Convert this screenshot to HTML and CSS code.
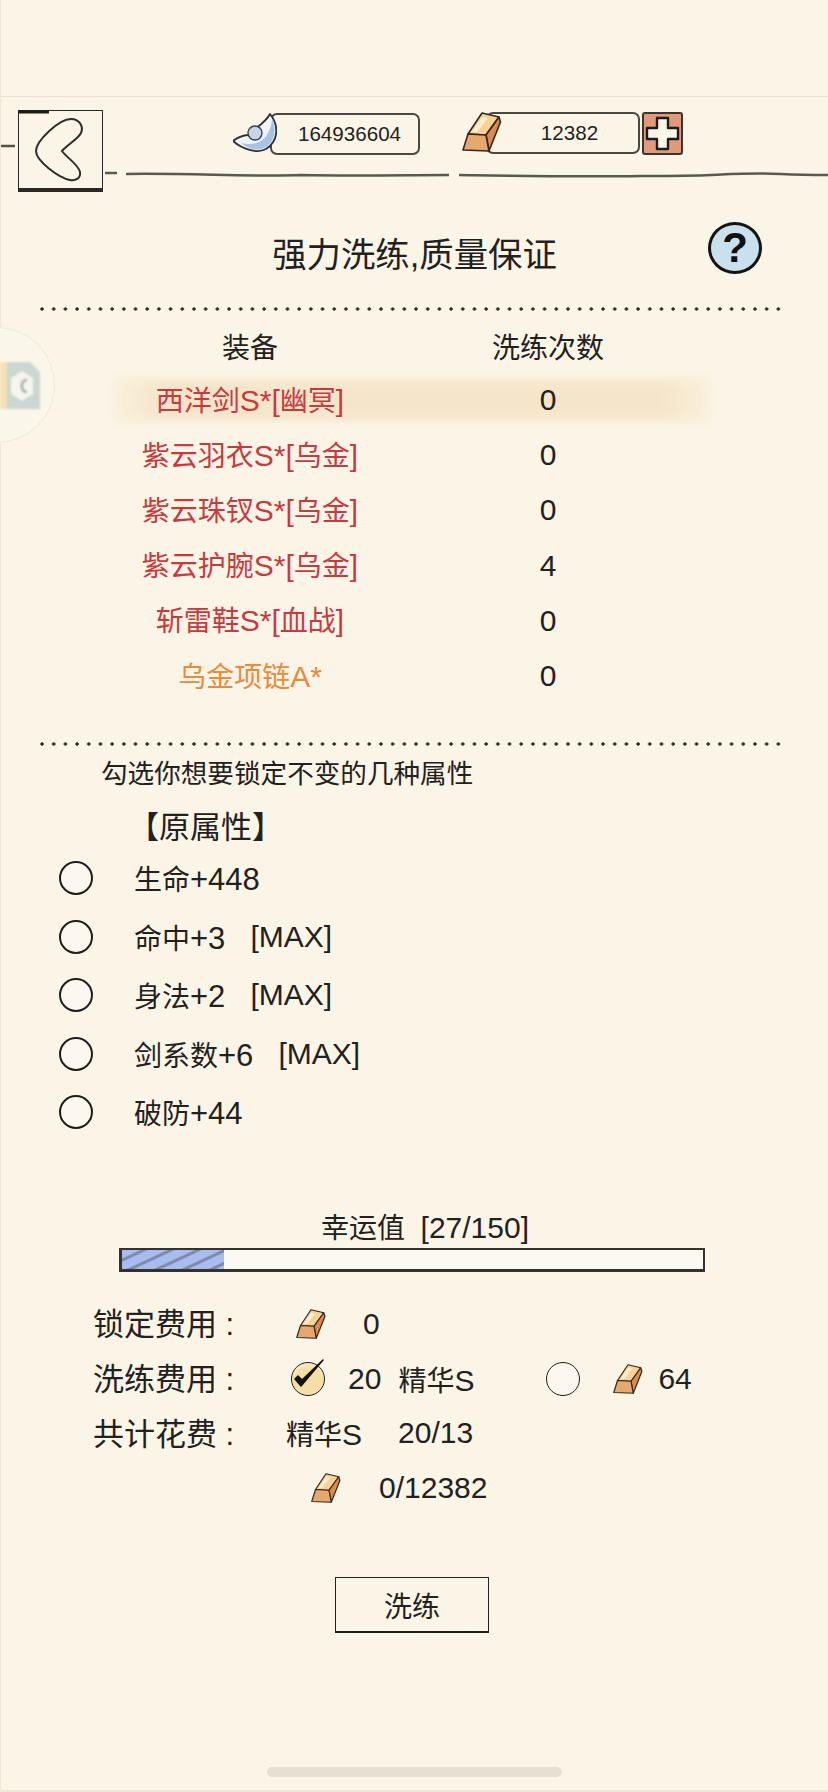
FILE: index.html
```html
<!DOCTYPE html>
<html lang="zh-CN">
<head>
  <meta charset="UTF-8">
  <meta name="viewport" content="width=device-width, initial-scale=1.0">
  <title>强力洗练</title>
  <link rel="stylesheet" href="styles.css">
</head>
<body>
  <svg class="defs" width="0" height="0">
    <symbol id="ingot" viewBox="0 0 40 40">
      <polygon points="20,1 37,5 24,23 6,22" fill="#f7d295" stroke="#33261a" stroke-width="1.6" stroke-linejoin="round"/>
      <polygon points="20,5 26,6 15,20 10,20" fill="#fdeccd"/>
      <polygon points="37,5 38.5,10 27,39 24,23" fill="#de8a4f" stroke="#33261a" stroke-width="1.6" stroke-linejoin="round"/>
      <polygon points="6,22 24,23 27,39 1,38" fill="#e6a86c" stroke="#33261a" stroke-width="1.6" stroke-linejoin="round"/>
    </symbol>
  </svg>

  <div class="page">
    <div class="status-space"></div>

    <div class="topbar">
      <svg class="topbar-line" viewBox="0 0 828 60" width="828" height="60">
        <path d="M0 21 H14" fill="none" stroke="#55524a" stroke-width="2.5"/>
        <path d="M104 48 H116 M125 49 C190 48 250 52 300 50 C350 51 410 50 448 50 M458 50 C520 51 570 52 640 51 C700 52 740 47 780 49 C800 50 815 50 828 50" fill="none" stroke="#5b5850" stroke-width="2.5"/>
      </svg>
      <button class="back-btn">
        <svg viewBox="0 0 85 82" width="85" height="82">
          <path d="M2 3 H32" fill="none" stroke="#1c1a18" stroke-width="3"/>
          <path d="M54 10 C62 10 67 17 64 24 C61 30 50 36 45 42 C50 49 61 55 63 63 C64 69 59 72 53 71 C42 69 19 52 19 42 C19 32 42 10 54 10 Z" fill="none" stroke="#2f2d2a" stroke-width="2"/>
        </svg>
      </button>
      <div class="money money-silver">
        <svg class="money-icon" viewBox="0 0 44 40" width="44" height="40">
          <path d="M37 1 C46 12 46 28 33 36 C24 41 9 36 0 28 C5 24 11 22 17 22 C20 15 31 12 37 1 Z" fill="#eff4fa" stroke="#2c3038" stroke-width="1.8" stroke-linejoin="round"/>
          <path d="M8 30 C18 33 30 30 35 20 C38 14 39 9 39 6 C44 16 42 28 33 34 C24 39 15 36 8 30 Z" fill="#a9c4e3"/>
          <circle cx="22" cy="20" r="7" fill="#c6d6ea" stroke="#3a3f48" stroke-width="1.4"/>
        </svg>
        <span class="pill pill-silver">164936604</span>
      </div>
      <div class="money money-gold">
        <svg class="money-icon" width="40" height="40"><use href="#ingot"/></svg>
        <span class="pill pill-gold">12382</span>
        <svg class="plus-btn" viewBox="0 0 41 43" width="41" height="43">
          <rect x="1" y="1" width="39" height="41" rx="2" fill="#e09a7b" stroke="#3c3630" stroke-width="2"/>
          <path d="M15 6 H26 V16 H36 V27 H26 V37 H15 V27 H5 V16 H15 Z" fill="#fbf6ea" stroke="#1f1c1a" stroke-width="2.4" stroke-linejoin="round"/>
        </svg>
      </div>
    </div>

    <div class="title-row">
      <span></span>
      <h1 class="title">强力洗练,质量保证</h1>
      <div class="help-btn">?</div>
    </div>

    <div class="dots"></div>

    <div class="equip-table">
      <div class="equip-row equip-head"><span>装备</span><span>洗练次数</span></div>
      <div class="equip-row selected"><span class="red">西洋剑<span class="n">S*[</span>幽冥<span class="n">]</span></span><span class="count">0</span></div>
      <div class="equip-row"><span class="red">紫云羽衣<span class="n">S*[</span>乌金<span class="n">]</span></span><span class="count">0</span></div>
      <div class="equip-row"><span class="red">紫云珠钗<span class="n">S*[</span>乌金<span class="n">]</span></span><span class="count">0</span></div>
      <div class="equip-row"><span class="red">紫云护腕<span class="n">S*[</span>乌金<span class="n">]</span></span><span class="count">4</span></div>
      <div class="equip-row"><span class="red">斩雷鞋<span class="n">S*[</span>血战<span class="n">]</span></span><span class="count">0</span></div>
      <div class="equip-row"><span class="orange">乌金项链<span class="n">A*</span></span><span class="count">0</span></div>
    </div>

    <div class="dots dots-second"></div>

    <p class="hint">勾选你想要锁定不变的几种属性</p>
    <p class="attr-title">【原属性】</p>

    <div class="attr-list">
      <div class="attr-row"><span class="radio"></span><span>生命<span class="n">+448</span></span></div>
      <div class="attr-row"><span class="radio"></span><span>命中<span class="n">+3</span></span><span class="n max">[MAX]</span></div>
      <div class="attr-row"><span class="radio"></span><span>身法<span class="n">+2</span></span><span class="n max">[MAX]</span></div>
      <div class="attr-row"><span class="radio"></span><span>剑系数<span class="n">+6</span></span><span class="n max">[MAX]</span></div>
      <div class="attr-row"><span class="radio"></span><span>破防<span class="n">+44</span></span></div>
    </div>

    <div class="luck-label">幸运值&nbsp; <span class="n">[27/150]</span></div>
    <div class="luck-bar"><div class="luck-fill" style="width: 17.6%"></div></div>

    <div class="cost-list">
      <div class="cost-row">
        <span class="cost-label">锁定费用 :</span>
        <svg class="ingot ingot-lock"><use href="#ingot"/></svg>
        <span class="n lock-num">0</span>
      </div>
      <div class="cost-row">
        <span class="cost-label">洗练费用 :</span>
        <span class="radio radio-on">
          <svg viewBox="0 0 34 34" width="34" height="34">
            <path d="M5 18 L11 25 L33 -1 L12 19 L8 15 Z" fill="#141414" stroke="#141414" stroke-width="1.5" stroke-linejoin="round"/>
          </svg>
        </span>
        <span class="n wash-num">20</span>
        <span class="wash-item">精华<span class="n">S</span></span>
        <span class="radio radio-alt"></span>
        <svg class="ingot ingot-alt"><use href="#ingot"/></svg>
        <span class="n alt-num">64</span>
      </div>
      <div class="cost-row">
        <span class="cost-label">共计花费 :</span>
        <span>精华<span class="n">S</span></span>
        <span class="n total-num">20/13</span>
      </div>
      <div class="cost-row cost-row-gold">
        <svg class="ingot"><use href="#ingot"/></svg>
        <span class="n gold-num">0/12382</span>
      </div>
    </div>

    <button class="wash-btn">洗练</button>

    <div class="home-bar"></div>
  </div>

  <div class="float-ball">
    <svg viewBox="0 0 60 116" width="60" height="116">
      <rect x="0" y="34" width="8" height="47" fill="#f5dfa6"/>
      <path d="M7 34 H30 L40 44 V81 H7 Z" fill="#bfd0cc"/>
      <path d="M22 43 L33 50 V66 L22 73 L11 66 V50 Z" fill="#f6f5ee"/>
      <path d="M27 52 C20 52 20 64 27 64" fill="none" stroke="#8b9b98" stroke-width="2.5"/>
    </svg>
  </div>
</body>
</html>
```

FILE: styles.css
```css
* {
  box-sizing: border-box;
}
html, body {
  margin: 0;
  padding: 0;
}
body {
  position: relative;
  width: 828px;
  height: 1792px;
  overflow: hidden;
  background-color: #fbf5e7;
  font-family: "Liberation Sans", "Noto Sans CJK SC", sans-serif;
  font-size: 28px;
  color: #23211e;
}
.defs {
  position: absolute;
}
.page {
  display: flex;
  flex-direction: column;
  height: 1792px;
  border-left: 1px solid #eee7d6;
  border-bottom: 2px solid #efe8d8;
}
p, h1 {
  margin: 0;
  font-weight: normal;
}
/* latin and digits run a bit larger than the chinese text */
.n {
  font-size: 30px;
}

.status-space {
  flex: none;
  height: 97px;
  border-bottom: 1px solid #e6e0cf;
}

/* top bar */
.topbar {
  position: relative;
  flex: none;
  display: flex;
  align-items: flex-start;
  height: 100px;
  padding: 13px 0 0 17px;
}
.topbar-line {
  position: absolute;
  left: 0;
  top: 28px;
}
.back-btn {
  position: relative;
  width: 85px;
  height: 82px;
  padding: 0;
  background: #fbf5e7;
  border: 1.5px solid #2a2825;
  border-bottom-width: 4px;
}
.back-btn svg {
  display: block;
  margin: -2px 0 0 -2px;
}
.money {
  position: relative;
  display: flex;
  align-items: flex-start;
}
.money-silver {
  margin-left: 130px;
  margin-top: 3px;
}
.money-gold {
  margin-left: 42px;
  margin-top: 2px;
}
.money-icon {
  position: relative;
  z-index: 1;
  flex: none;
}
.pill {
  display: flex;
  align-items: center;
  justify-content: center;
  height: 42px;
  font-size: 20.6px;
  border: 2.5px solid #4b4841;
  border-radius: 7px;
}
.pill-silver {
  width: 150px;
  margin-left: -7px;
  padding-left: 9px;
}
.pill-gold {
  width: 154px;
  margin-left: -16px;
  padding-left: 13px;
}
.plus-btn {
  flex: none;
  margin-left: 2px;
}

/* title */
.title-row {
  flex: none;
  display: grid;
  grid-template-columns: 1fr auto 1fr;
  align-items: center;
  height: 60px;
  margin-top: 25px;
}
.title {
  font-size: 34.4px;
}
.help-btn {
  align-self: start;
  justify-self: end;
  width: 54px;
  height: 52px;
  margin-right: 66px;
  border: 3px solid #141414;
  border-radius: 50%;
  background: #c9e0ef;
  font-family: "Liberation Sans", sans-serif;
  font-size: 42px;
  font-weight: bold;
  line-height: 46px;
  text-align: center;
  color: #111;
}

.dots {
  flex: none;
  width: 746px;
  height: 4px;
  margin: 25px 0 0 39px;
  background: radial-gradient(circle at 2px 2px, #2c2a26 1.4px, transparent 1.9px) 0 0 / 11.7px 4px repeat-x;
}
.dots-second {
  margin-top: 40px;
}

/* equipment table */
.equip-table {
  flex: none;
  margin: 10px 0 0 114px;
  width: 596px;
}
.equip-row {
  position: relative;
  display: grid;
  grid-template-columns: 270px 326px;
  align-items: center;
  height: 55.2px;
  text-align: center;
}
.equip-row > span {
  position: relative;
}
.equip-head {
  height: 50px;
}
.count {
  padding-top: 3px;
  font-size: 30px;
}
.selected::before {
  content: "";
  position: absolute;
  left: 0;
  right: 2px;
  top: 8px;
  bottom: 5px;
  background: linear-gradient(90deg, #f9efda, #f5e6cb 8%, #f5e6cb 92%, #f9efda);
  filter: blur(4px);
}
.red {
  color: #c93a3f;
}
.orange {
  color: #e98a3c;
}

/* attributes */
.hint {
  flex: none;
  height: 36px;
  margin: 10px 0 0 100px;
  font-size: 26.6px;
  line-height: 36px;
}
.attr-title {
  flex: none;
  height: 40px;
  margin: 16px 0 0 127px;
  font-size: 31px;
  line-height: 40px;
}
.attr-list {
  flex: none;
  margin-top: 1px;
}
.attr-row {
  display: flex;
  align-items: center;
  height: 58.5px;
  padding-left: 58px;
}
.attr-row .radio {
  margin-right: 41px;
}
.attr-row span .n {
  font-size: 31px;
}
.max {
  margin-left: 25px;
}
.radio {
  flex: none;
  display: block;
  width: 34px;
  height: 34px;
  border: 2px solid #1f1d1b;
  border-radius: 50%;
  background: #fcf8ef;
}

/* luck */
.luck-label {
  flex: none;
  height: 36px;
  margin-top: 68px;
  line-height: 36px;
  text-align: center;
  padding-left: 21px;
}
.luck-bar {
  flex: none;
  width: 586px;
  height: 24px;
  margin: 2px 0 0 118px;
  background: #fcf9f1;
  border: 3px solid #333230;
  border-top-width: 2px;
  border-right-width: 2px;
  overflow: hidden;
}
.luck-fill {
  height: 100%;
  background: repeating-linear-gradient(155deg, #a9bcf0 0 7px, #7c8aa8 8.5px 10px, #a9bcf0 11.5px);
}

/* costs */
.cost-list {
  flex: none;
  margin-top: 25px;
  padding-left: 92px;
}
.cost-row {
  display: flex;
  align-items: center;
  height: 54.7px;
}
.cost-label {
  flex: none;
  width: 193px;
  padding-bottom: 4px;
  font-size: 31px;
  white-space: nowrap;
}
.ingot {
  flex: none;
  width: 30px;
  height: 32px;
}
.ingot-lock {
  margin-left: 10px;
}
.lock-num {
  margin-left: 37px;
}
.radio-on {
  position: relative;
  margin-left: 5px;
  border-width: 1.5px;
  background: radial-gradient(circle at 50% 60%, #f6dea4 55%, #fcf4e0 90%);
}
.radio-on svg {
  position: absolute;
  left: -2px;
  top: -2px;
  overflow: visible;
}
.wash-num {
  margin-left: 23px;
}
.wash-item {
  margin-left: 17px;
}
.radio-alt {
  margin-left: 72px;
  border-width: 1.5px;
}
.ingot-alt {
  margin-left: 33px;
}
.alt-num {
  margin-left: 15px;
}
.total-num {
  margin-left: 36px;
}
.cost-row-gold {
  padding-left: 218px;
}
.gold-num {
  margin-left: 38px;
}

.wash-btn {
  flex: none;
  width: 154px;
  height: 56px;
  margin: 62px 0 0 334px;
  padding: 0;
  background: #fbf5e8;
  border: 1.5px solid #23211e;
  border-bottom-width: 2.5px;
  font-family: inherit;
  font-size: 28px;
  color: #23211e;
}

.home-bar {
  flex: none;
  width: 295px;
  height: 10px;
  margin: 134px 0 0 266px;
  border-radius: 5px;
  background: #e6dfd2;
}

/* floating ball on the left edge */
.float-ball {
  position: absolute;
  left: -61px;
  top: 327px;
  width: 116px;
  height: 116px;
  border: 1.5px solid #eee9dc;
  border-radius: 50%;
  background: #fbf6ea;
  overflow: hidden;
}
.float-ball svg {
  position: absolute;
  left: 60px;
  top: 0;
  opacity: 0.8;
  filter: blur(0.8px);
}
```
